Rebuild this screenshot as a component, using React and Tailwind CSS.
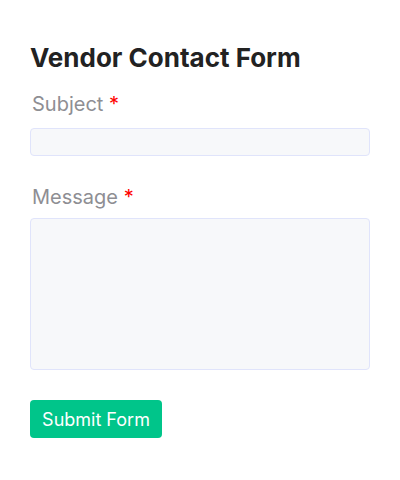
export default function App() {
  return (
    <div className="w-[400px] h-[480px] bg-white px-[30px] pt-[40px]" style={{ fontFamily: "Inter, 'Noto Sans', sans-serif" }}>
      <h1 className="text-[26px] leading-[36px] font-bold text-[#222222]">Vendor Contact Form</h1>
      <div className="mt-[14px] flex flex-col">
        <label className="text-[20px] leading-[28px] text-[#8e8e93] pl-[2px]">
          Subject <span className="text-[#ff0000]">*</span>
        </label>
        <div className="mt-[10px] h-[28px] rounded-[4px] border border-[#e0e4fb] bg-[#f7f8fa]"></div>
        <label className="mt-[27px] text-[20px] leading-[28px] text-[#8e8e93] pl-[2px]">
          Message <span className="text-[#ff0000]">*</span>
        </label>
        <div className="mt-[7px] h-[152px] rounded-[4px] border border-[#e0e4fb] bg-[#f7f8fa]"></div>
        <div className="mt-[30px]">
          <button className="h-[38px] w-[132px] rounded-[4px] bg-[#00c58a] text-white text-[18px]">Submit Form</button>
        </div>
      </div>
    </div>
  );
}
